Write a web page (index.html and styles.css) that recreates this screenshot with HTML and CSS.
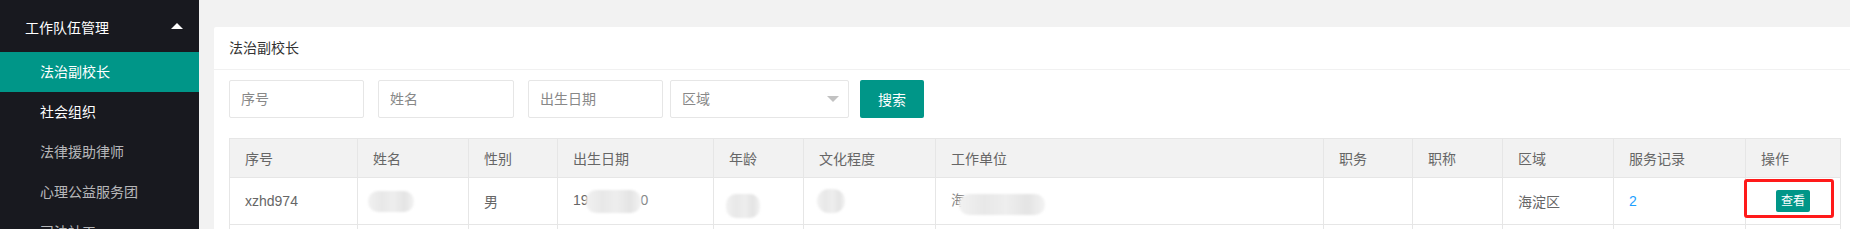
FILE: index.html
```html
<!DOCTYPE html>
<html lang="zh-CN">
<head>
<meta charset="utf-8">
<title>法治副校长</title>
<link rel="stylesheet" href="styles.css">
</head>
<body>
<div class="layout">
  <aside class="side">
    <div class="nav-group">
      <span>工作队伍管理</span>
      <span class="caret-up"></span>
    </div>
    <div class="nav-item active">法治副校长</div>
    <div class="nav-item bright">社会组织</div>
    <div class="nav-item">法律援助律师</div>
    <div class="nav-item">心理公益服务团</div>
    <div class="nav-item">司法社工</div>
  </aside>
  <main class="main">
    <section class="card">
      <div class="card-header">法治副校长</div>
      <div class="card-body">
        <div class="search">
          <div class="input w135">序号</div>
          <div class="input w136">姓名</div>
          <div class="input w135">出生日期</div>
          <div class="input select">区域<span class="caret-down"></span></div>
          <button class="btn">搜索</button>
        </div>
        <table class="grid">
          <colgroup>
            <col style="width:128px"><col style="width:111px"><col style="width:89px"><col style="width:156px"><col style="width:90px"><col style="width:132px"><col style="width:388px"><col style="width:89px"><col style="width:90px"><col style="width:111px"><col style="width:132px"><col style="width:95px">
          </colgroup>
          <thead>
            <tr><th>序号</th><th>姓名</th><th>性别</th><th>出生日期</th><th>年龄</th><th>文化程度</th><th>工作单位</th><th>职务</th><th>职称</th><th>区域</th><th>服务记录</th><th>操作</th></tr>
          </thead>
          <tbody>
            <tr>
              <td>xzhd974</td>
              <td><span class="blur b-name"></span></td>
              <td>男</td>
              <td>19<span class="blur b-date"></span><span class="faint">0</span></td>
              <td><span class="blur b-age"></span></td>
              <td><span class="blur b-edu"></span></td>
              <td><span class="faint">海</span><span class="blur b-unit"></span></td>
              <td></td>
              <td></td>
              <td>海淀区</td>
              <td><a class="link">2</a></td>
              <td class="op"><span class="mark"></span><span class="btn-xs">查看</span></td>
            </tr>
            <tr class="next"><td></td><td></td><td></td><td></td><td></td><td></td><td></td><td></td><td></td><td></td><td></td><td></td></tr>
          </tbody>
        </table>
      </div>
    </section>
  </main>
</div>
</body>
</html>
```

FILE: styles.css
```css
html, body {
  margin: 0;
  padding: 0;
  height: 229px;
  overflow: hidden;
}
body {
  font-family: "Liberation Sans", "Noto Sans CJK SC", sans-serif;
  font-size: 14px;
  color: #666;
  background: #f2f2f2;
}
.layout {
  display: flex;
  height: 229px;
}
.side {
  width: 199px;
  flex: none;
  background: #18191f;
  color: rgba(255,255,255,.7);
}
.nav-group {
  height: 52px;
  display: flex;
  align-items: center;
  justify-content: space-between;
  padding: 2px 16px 0 25px;
  box-sizing: border-box;
  color: #fff;
}
.caret-up {
  width: 0;
  height: 0;
  border-left: 6px solid transparent;
  border-right: 6px solid transparent;
  border-bottom: 6px solid #fff;
  margin-top: -2px;
}
.nav-item {
  height: 40px;
  line-height: 40px;
  padding-left: 40px;
}
.nav-item.active {
  background: #009688;
  color: #fff;
}
.nav-item.bright {
  color: #fff;
}
.main {
  flex: 1;
  min-width: 0;
  padding: 27px 0 0 15px;
  overflow: hidden;
}
.card {
  width: 1642px;
  background: #fff;
  border-radius: 2px;
  height: 240px;
}
.card-header {
  height: 42px;
  line-height: 42px;
  padding: 0 15px;
  border-bottom: 1px solid #f1f1f1;
  color: #333;
}
.card-body {
  padding: 10px 15px;
}
.search {
  display: flex;
  align-items: center;
  height: 38px;
}
.input {
  height: 38px;
  box-sizing: border-box;
  border: 1px solid #e6e6e6;
  border-radius: 2px;
  line-height: 36px;
  padding-left: 11px;
  color: #888;
  margin-right: 14px;
}
.w135 { width: 135px; }
.w136 { width: 136px; }
.input.select {
  width: 179px;
  margin-left: -7px;
  margin-right: 11px;
  position: relative;
  display: flex;
  justify-content: space-between;
  align-items: center;
  padding-right: 9px;
}
.caret-down {
  width: 0;
  height: 0;
  border-left: 6px solid transparent;
  border-right: 6px solid transparent;
  border-top: 6px solid #c2c2c2;
}
.btn {
  width: 64px;
  height: 38px;
  border: 0;
  border-radius: 2px;
  background: #009688;
  color: #fff;
  font-family: inherit;
  font-size: 14px;
  padding: 0;
}
.grid {
  margin-top: 20px;
  border-collapse: collapse;
  table-layout: fixed;
  width: 1611px;
}
.grid th, .grid td {
  border: 1px solid #e6e6e6;
  padding: 0 15px;
  text-align: left;
  font-weight: normal;
  white-space: nowrap;
  overflow: visible;
}
.grid th {
  background: #f2f2f2;
  height: 38px;
  color: #666;
}
.grid td {
  height: 46px;
}
.grid tr.next td {
  height: 20px;
}
.faint { color: #888; }
.blur {
  display: inline-block;
  vertical-align: middle;
  border-radius: 10px;
  filter: blur(0.8px);
  background: linear-gradient(90deg, #f1f1f1 0%, #e8e8e8 30%, #eeeeee 55%, #e4e4e4 80%, #f3f3f3 100%);
}
.b-name { width: 46px; height: 21px; margin-left: -5px; }
.b-date { width: 55px; height: 23px; margin-left: -3px; }
.b-age { width: 34px; height: 24px; margin-left: -3px; margin-top: 10px; }
.b-edu { width: 28px; height: 24px; margin-left: -2px; border-radius: 14px; }
.b-unit { width: 86px; height: 21px; margin-left: -6px; margin-top: 6px; }
.link { color: #1e9fff; }
.op {
  position: relative;
}
.grid td.op {
  text-align: center;
  padding: 0;
}
.btn-xs {
  display: inline-block;
  height: 22px;
  line-height: 22px;
  padding: 0 5px;
  font-size: 12px;
  background: #009688;
  color: #fff;
  border-radius: 2px;
  vertical-align: middle;
}
.mark {
  position: absolute;
  left: -2px;
  top: 1px;
  width: 90px;
  height: 39px;
  box-sizing: border-box;
  border: 3px solid #ff1a1a;
  border-radius: 3px;
}
```
